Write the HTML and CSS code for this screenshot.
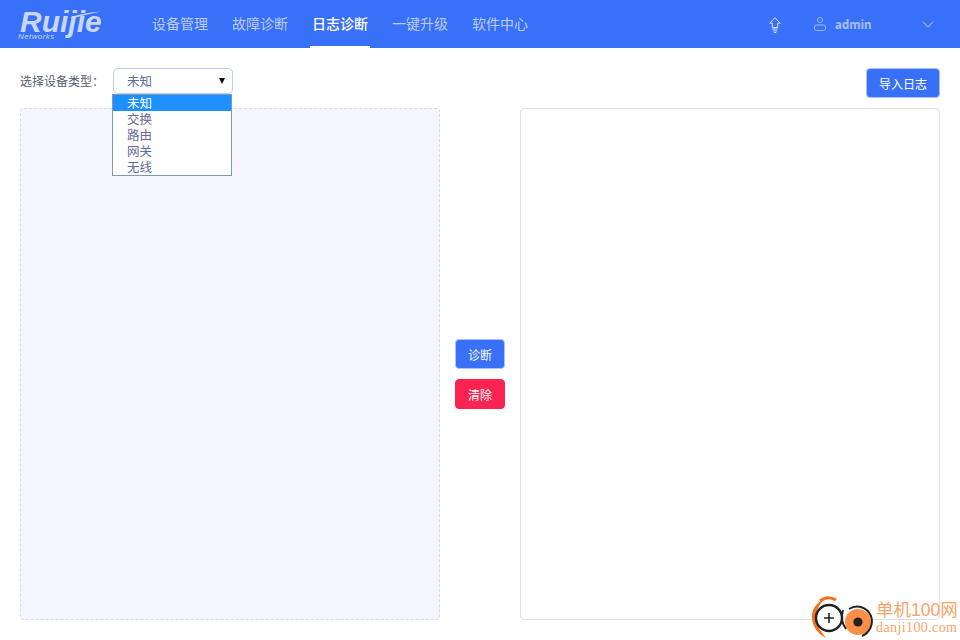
FILE: index.html
```html
<!DOCTYPE html>
<html lang="zh-CN">
<head>
    <meta charset="UTF-8">
    <title>日志诊断</title>
    <link rel="stylesheet" href="styles.css">
</head>
<body>
    <header class="topbar">
        <div class="logo">
            <span class="logo-name">Ruijie</span>
            <span class="logo-sub">Networks</span>
            <svg class="logo-swoosh" width="110" height="48" viewBox="0 0 110 48">
                <path d="M71 17Q85 12.5 101 11.5 86 14.5 72 18.5Z" fill="#c9d7fc"/>
            </svg>
        </div>
        <nav class="nav">
            <a class="nav-item">设备管理</a>
            <a class="nav-item">故障诊断</a>
            <a class="nav-item active">日志诊断</a>
            <a class="nav-item">一键升级</a>
            <a class="nav-item">软件中心</a>
        </nav>
        <div class="topbar-right">
            <svg class="icon-upgrade" width="12" height="16" viewBox="0 0 12 16" fill="none" stroke="#d5e0fd" stroke-width="1">
                <path d="M6 .7 .8 6.2H3.3V10.5H8.7V6.2H11.2Z"/>
                <path d="M3.3 12H8.7M3.8 13.8H8.2M4.8 15.5H7.2"/>
            </svg>
            <svg class="icon-user" width="12" height="14" viewBox="0 0 12 14" fill="none" stroke="#9db8fa" stroke-width="1">
                <circle cx="6" cy="3" r="2.5"/>
                <rect x=".5" y="8" width="11" height="5.5" rx="2"/>
            </svg>
            <span class="user-name">admin</span>
            <svg class="icon-arrow" width="12" height="7" viewBox="0 0 12 7" fill="none" stroke="#8dabf9" stroke-width="1.2">
                <path d="M1 1 6 6 11 1"/>
            </svg>
        </div>
    </header>

    <main class="page">
        <div class="toolbar">
            <label class="type-label">选择设备类型：</label>
            <div class="type-select">
                <div class="select-box">未知<span class="caret"></span></div>
                <ul class="select-list">
                    <li class="selected">未知</li>
                    <li>交换</li>
                    <li>路由</li>
                    <li>网关</li>
                    <li>无线</li>
                </ul>
            </div>
            <button class="btn btn-import">导入日志</button>
        </div>
        <div class="panels">
            <div class="panel panel-drop"></div>
            <div class="actions">
                <button class="btn btn-small">诊断</button>
                <button class="btn btn-small btn-danger">清除</button>
            </div>
            <div class="panel panel-result"></div>
        </div>
    </main>

    <div class="watermark">
        <svg width="62" height="44" viewBox="0 0 62 44" fill="none">
            <path d="M13 3C5 7 0 14 1 23 2 31 7 38 15 42 10 35 5 30 5 22 5 14 9 8 13 3Z" fill="#f4711f"/>
            <path d="M9 5C14 1 20 1 25 4" stroke="#f4711f" stroke-width="3"/>
            <circle cx="18" cy="22" r="13" fill="#fff" stroke="#222" stroke-width="2.4"/>
            <path d="M18 17V27M13 22H23" stroke="#222" stroke-width="1.6"/>
            <circle cx="47" cy="26" r="13" fill="#fb8f45"/>
            <path d="M38 13C46 8 56 11 60 20 63 29 58 37 51 40" stroke="#222" stroke-width="2"/>
            <path d="M32 14C30 21 31 28 35 33" stroke="#222" stroke-width="2"/>
            <circle cx="47" cy="26" r="4.6" fill="#222"/>
        </svg>
        <div class="watermark-text">
            <span class="wm-title">单机100网</span>
            <span class="wm-url">danji100.com</span>
        </div>
    </div>
</body>
</html>
```

FILE: styles.css
```css
* {
    margin: 0;
    padding: 0;
    box-sizing: border-box;
}

html, body {
    height: 100%;
    overflow: hidden;
}

body {
    background: #fff;
    font-family: "Liberation Sans", "Noto Sans CJK SC", sans-serif;
    color: #515a6e;
    position: relative;
}

.topbar {
    display: flex;
    align-items: center;
    height: 48px;
    background: #3870f7;
}

.logo {
    position: relative;
    display: flex;
    flex-direction: column;
    width: 150px;
    height: 48px;
    padding: 10px 0 0 20px;
    color: #c9d7fc;
    font-style: italic;
    font-weight: bold;
}
.logo-name { font-size: 30px; line-height: 24px; }
.logo-sub { font-size: 8px; line-height: 9px; margin-top: -2px; margin-left: -2px; letter-spacing: 0.4px; font-weight: normal; }
.logo-swoosh { position: absolute; top: 0; left: 0; }

.nav {
    display: flex;
    gap: 20px;
    height: 48px;
}
.nav-item {
    width: 60px;
    line-height: 49px;
    text-align: center;
    font-size: 14px;
    color: #bccdfb;
}
.nav-item.active {
    color: #fff;
    font-weight: 500;
    border-bottom: 2px solid #fff;
}

.topbar-right {
    display: flex;
    align-items: center;
    margin-left: auto;
    padding-right: 26px;
}
.icon-upgrade { margin-right: 33px; margin-top: 2px; }
.icon-user { margin-right: 9px; }
.user-name {
    width: 87px;
    font-family: "Open Sans", "Liberation Sans", sans-serif;
    font-size: 11.5px;
    font-weight: 700;
    color: #a9c0fb;
}

.page {
    padding: 20px 20px 0;
}

.toolbar {
    display: flex;
    align-items: flex-start;
    height: 40px;
}
.type-label {
    width: 93px;
    line-height: 28px;
    font-size: 12px;
    color: #555d70;
}
.type-select {
    position: relative;
    width: 120px;
}
.select-box {
    position: relative;
    height: 26px;
    padding-left: 13px;
    line-height: 26px;
    font-size: 12.5px;
    color: #5b6b9c;
    background: #fff;
    border: 1px solid #b9cdf5;
    border-radius: 5px;
}
.caret {
    position: absolute;
    right: 7px;
    top: 9px;
    border-left: 3.5px solid transparent;
    border-right: 3.5px solid transparent;
    border-top: 6px solid #111;
}
.select-list {
    position: absolute;
    top: 26px;
    left: -1px;
    width: 120px;
    height: 82px;
    list-style: none;
    background: #fff;
    border: 1px solid #7f9ab5;
    z-index: 5;
}
.select-list li {
    height: 16px;
    padding: 2px 0 0 14px;
    line-height: 14px;
    font-size: 12.5px;
    color: #64699a;
}
.select-list li.selected {
    background: #1e90ff;
    color: #fff;
}

.btn {
    font-family: inherit;
    font-size: 12px;
    color: #fff;
    background: #3870f7;
    border: 1px solid #a9c2fb;
    border-radius: 4px;
    cursor: pointer;
}
.btn-import {
    width: 74px;
    height: 30px;
    margin-left: auto;
}
.btn-small {
    width: 50px;
    height: 30px;
}
.btn-danger {
    background: #fb2350;
    border-color: #fb2350;
}

.panels {
    display: flex;
    height: 512px;
}
.panel {
    width: 420px;
    border-radius: 4px;
}
.panel-drop {
    background: #f4f5fe;
    border: 1px dashed #d3d8f8;
}
.panel-result {
    border: 1px solid #dcdfe6;
}
.actions {
    display: flex;
    flex-direction: column;
    align-items: center;
    justify-content: center;
    gap: 10px;
    width: 80px;
    padding-top: 20px;
}

/* sits over the corner of the result panel */
.watermark {
    position: absolute;
    right: 0;
    bottom: 0;
    display: flex;
    align-items: center;
    width: 149px;
    height: 44px;
    z-index: 10;
}
.watermark-text {
    display: flex;
    flex-direction: column;
    margin-left: 3px;
    color: #f9a26a;
    white-space: nowrap;
}
.wm-title { font-size: 17.5px; line-height: 20px; }
.wm-url {
    font-family: "Liberation Serif", serif;
    font-size: 14px;
    line-height: 16px;
    letter-spacing: 0.4px;
}
```
